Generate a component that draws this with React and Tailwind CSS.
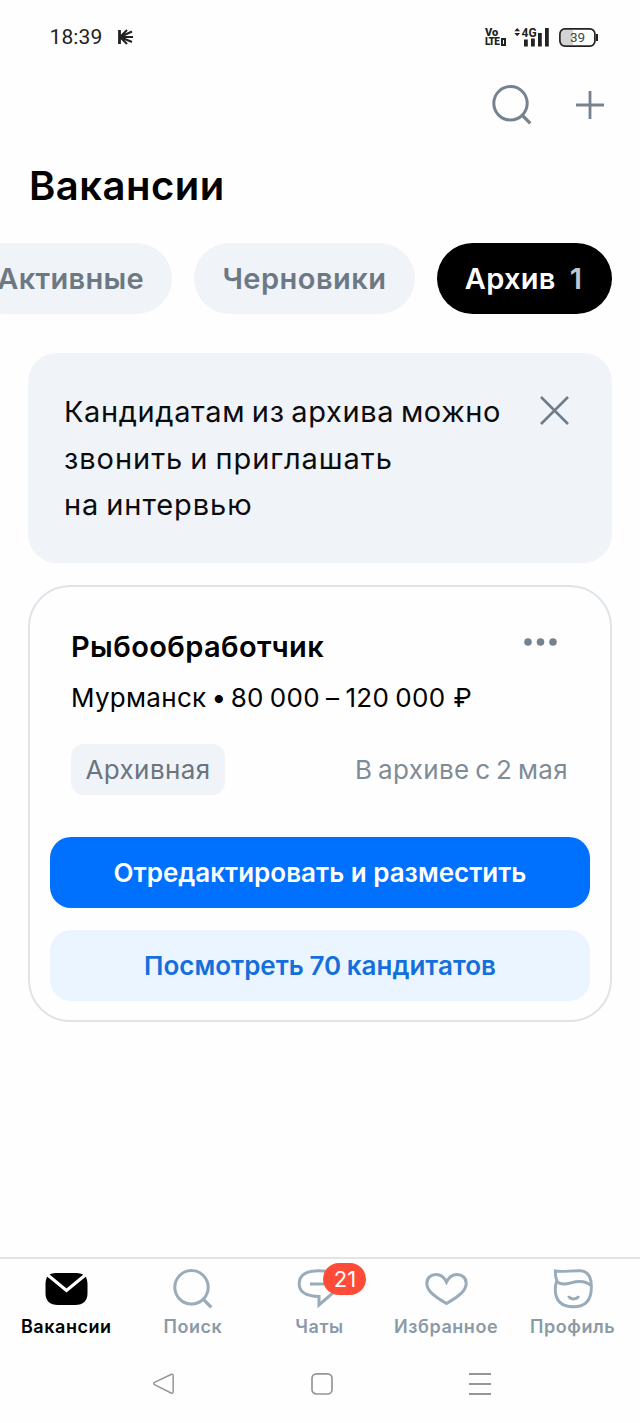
import React from "react";

const SearchIcon = ({ className }) => (
  <svg className={className} viewBox="0 0 40 40" fill="none" stroke="currentColor">
    <circle cx="18.5" cy="18.3" r="16.7" strokeWidth="3" />
    <path d="M30.5 30.5L38.3 38.3" strokeWidth="3.2" />
  </svg>
);

const StatusBar = () => (
  <div className="flex h-[74px] shrink-0 items-center justify-between pl-[49.5px] pr-[41px] text-[#222]">
    <div className="flex items-center gap-[15px]">
      <span className="font-['Roboto',sans-serif] text-[21px] leading-6 tracking-[0.1px]">18:39</span>
      <svg className="h-4 w-[17px]" viewBox="0 0 17 16" fill="none" stroke="currentColor">
        <path d="M2.5 1V15" strokeWidth="2.8" />
        <path d="M3 8L10 1M3 8L15 2.5M3 8H16M3 8L15 13M3 8L10 15" strokeWidth="2" />
      </svg>
    </div>
    <div className="flex items-center">
      <div className="mr-[8px] flex w-[21px] flex-col font-['Roboto',sans-serif] text-[10px] font-black leading-[9.5px]">
        <span className="text-[11px]">Vo</span>
        <span className="flex items-center tracking-[-0.8px]">
          LTE
          <i className="ml-[2px] h-[8px] w-[5px] shrink-0 border-2 border-[#222]" />
        </span>
      </div>
      <svg className="mr-[9px] h-[20px] w-[36px] overflow-visible" viewBox="0 0 36 20" fill="currentColor">
        <path d="M0.300 4.300L3.200 1L6.100 4.300ZM0.300 6H6.100L3.200 9.300Z" />
        <text x="7.5" y="10" className="font-['Roboto',sans-serif] text-[12px] font-bold">4G</text>
        <path d="M10 12.5H13.800V19.500H10ZM17 11.500H20.800V19.500H17ZM24 6H27.800V19.500H24ZM31 1H34.800V19.500H31Z" />
      </svg>
      <svg className="h-[19px] w-[40px]" viewBox="0 0 40 19">
        <path d="M5 2H14V17H5Q2 17 2 14V5Q2 2 5 2Z" fill="#d4d4d4" />
        <rect x="0.9" y="0.9" width="35" height="17.2" rx="5" fill="none" stroke="#222" strokeWidth="1.7" />
        <path d="M38 6V13" stroke="#222" strokeWidth="2" />
        <text x="18.5" y="14.2" textAnchor="middle" fill="#444" className="font-['Roboto',sans-serif] text-[13.5px]">39</text>
      </svg>
    </div>
  </div>
);

const Header = () => (
  <>
    <div className="flex h-[62px] items-center justify-end gap-[43px] pr-[35px] text-[#76838f]">
      <SearchIcon className="h-10 w-10" />
      <svg className="h-[30px] w-[30px]" viewBox="0 0 30 30" stroke="currentColor" strokeWidth="2.8">
        <path d="M15 1V29M1 15H29" />
      </svg>
    </div>
    <h1 className="mt-[26px] pl-[29px] text-[40px] font-semibold leading-[48px] tracking-[0.5px] text-black">
      Вакансии
    </h1>
  </>
);

const Tabs = () => (
  <div className="mt-[33px] flex h-[71px] justify-end gap-[22px] overflow-hidden pr-[28px] text-[29px] font-semibold tracking-[0.3px] text-[#6c7883]">
    <div className="flex w-[201px] shrink-0 items-center justify-end rounded-full bg-[#f0f3f8] pr-[28px]">
      Активные
    </div>
    <div className="flex w-[221px] shrink-0 items-center justify-center rounded-full bg-[#f0f3f8] tracking-[0.5px]">
      Черновики
    </div>
    <div className="flex w-[175px] shrink-0 items-center justify-center gap-[14px] rounded-full bg-black pr-[2px] text-white">
      Архив <span className="text-[#c0c6d2]">1</span>
    </div>
  </div>
);

const Notice = () => (
  <div className="mx-[28px] mt-[39px] flex h-[210px] justify-between rounded-[29px] bg-[#f0f3f8] pl-[36px] pr-[43px] pt-[36px]">
    <p className="whitespace-nowrap text-[29px] leading-[46.5px] text-[#0b0c0e] [word-spacing:-2px]">
      <span className="tracking-[0.62px]">Кандидатам из архива можно</span>
      <br />
      <span className="tracking-[0.95px]">звонить и приглашать</span>
      <br />
      <span className="tracking-[0.9px]">на интервью</span>
    </p>
    <svg className="mt-[7px] h-[29px] w-[29px] shrink-0" viewBox="0 0 29 29" stroke="#6f7d8a" strokeWidth="2.6">
      <path d="M1 1L28 28M28 1L1 28" />
    </svg>
  </div>
);

const VacancyCard = () => (
  <div className="mx-[28px] mt-[22px] h-[437px] rounded-[42px] border-2 border-[#dfe4e9] px-[20px]">
    <div className="flex justify-between pl-[21px] pr-[33px] pt-[40px]">
      <h2 className="whitespace-nowrap text-[29px] font-semibold leading-[40px] tracking-[0.4px] text-black">
        Рыбообработчик
      </h2>
      <svg className="mt-[10.5px] h-2 w-[33px]" viewBox="0 0 33 8" fill="#76838f">
        <circle cx="4" cy="4" r="3.8" />
        <circle cx="16.5" cy="4" r="3.8" />
        <circle cx="29" cy="4" r="3.8" />
      </svg>
    </div>
    <p className="mt-[12px] whitespace-nowrap pl-[21px] text-[26px] leading-[38px] tracking-[0.3px] text-black [word-spacing:-1.5px]">
      Мурманск<span className="-ml-[1px]"> •</span>
      <span className="-ml-[2px]"> 80 000 – 120 000</span>
      <span className="ml-[2px]"> ₽</span>
    </p>
    <div className="mt-[27px] flex h-[51px] items-center justify-between pl-[21px] pr-[22px] text-[26px]">
      <span className="flex h-full w-[154px] items-center justify-center rounded-[13px] bg-[#f0f3f8] tracking-[0.4px] text-[#6a7580]">
        Архивная
      </span>
      <span className="whitespace-nowrap tracking-[0.35px] text-[#7f8c98] [word-spacing:-2px]">В архиве с 2 мая</span>
    </div>
    <button className="mt-[42px] flex h-[71px] w-full items-center justify-center rounded-[21px] bg-[#0070ff] text-[26px] font-semibold text-white">
      Отредактировать и разместить
    </button>
    <button className="mt-[22px] flex h-[71px] w-full items-center justify-center rounded-[21px] bg-[#ebf5ff] text-[26px] font-semibold text-[#146fdc] [word-spacing:-1px]">
      Посмотреть 70 кандитатов
    </button>
  </div>
);

const tabs = [
  {
    label: "Вакансии",
    icon: (
      <svg className="h-10 w-[44px]" viewBox="0 0 44 40">
        <path d="M12 4H32Q43.500 4 43.500 15V24Q43.500 36 31 36H14Q1.500 36 1.500 24V15Q1.500 4 12 4Z" fill="#000" />
        <path d="M2.500 5L22.500 21.500L42.500 5" fill="none" stroke="#fff" strokeWidth="3.200" />
      </svg>
    ),
  },
  { label: "Поиск", icon: <SearchIcon className="h-10 w-10" /> },
  {
    label: "Чаты",
    badge: 21,
    icon: (
      <svg className="h-10 w-[44px]" viewBox="0 0 44 40" fill="none" stroke="currentColor" strokeWidth="3">
        <path d="M22 27.500V36L34 25.500C39 23 42 19.500 42 15C42 6.500 35 1.700 22 1.700C8 1.700 2.200 7 2.200 14.700C2.200 23 8 27 22 27.500Z" />
        <path d="M13 15H30" />
      </svg>
    ),
  },
  {
    label: "Избранное",
    icon: (
      <svg className="h-10 w-[44px]" viewBox="0 0 44 40" fill="none" stroke="currentColor" strokeWidth="3">
        <path d="M22.500 34.500C8.500 26.500 2.800 21 2.800 14.300C2.800 9 6.800 5.400 12 5.400C17 5.400 20.100 8 22.500 13C24.900 8 28 5.400 33 5.400C38.200 5.400 42.200 9 42.200 14.300C42.200 21 36.500 26.500 22.500 34.500Z" />
      </svg>
    ),
  },
  {
    label: "Профиль",
    icon: (
      <svg className="h-10 w-10" viewBox="0 0 40 40" fill="none" stroke="currentColor" strokeWidth="2.900">
        <path d="M2.300 2C9 3.300 18 1.500 27 1.700C34.500 1.900 38.400 7 38.400 18C38.400 31.500 32 37.800 20.500 37.800C8.500 37.800 2.300 32 2.300 20C2.300 16.500 3 14 3.800 11.500C2.600 8.500 2.300 5.500 2.300 2Z" />
        <path d="M3.800 12.500C7 15.500 11.500 15.700 18 13.800C26 11.500 33.500 12.500 38 16.500" />
        <path d="M15.500 27C17.300 31 23.900 31 25.700 27" />
      </svg>
    ),
  },
];

const BottomNav = () => (
  <nav className="mt-auto flex h-[91px] shrink-0 border-t-2 border-[#dfe4e8] pl-[3px] pr-[4px] pt-[10px]">
    {tabs.map((tab, i) => (
      <div
        key={tab.label}
        className={`flex flex-1 flex-col items-center ${i === 0 ? "text-black" : "text-[#9aabb9]"}`}
      >
        <div className="relative flex h-10 justify-center">
          {tab.icon}
          {tab.badge && (
            <span className="absolute -top-[6px] left-[26px] flex h-[32px] w-[43px] items-center justify-center rounded-full bg-[#ff4b37] text-[22px] text-white">
              {tab.badge}
            </span>
          )}
        </div>
        <span
          className={`mt-[6px] whitespace-nowrap text-[18px] font-semibold leading-6 tracking-[0.55px] ${
            i === 0 ? "text-black" : "text-[#8b9aa7]"
          }`}
        >
          {tab.label}
        </span>
      </div>
    ))}
  </nav>
);

const SystemNav = () => (
  <div className="flex h-[75px] shrink-0 items-start justify-between pl-[152px] pr-[148px] pt-[24px] text-[#969696]">
    <svg className="h-6 w-6" viewBox="0 0 24 24" fill="none" stroke="currentColor" strokeWidth="1.500">
      <path d="M19.500 2.300L2.500 10.300Q1 11.500 2.500 12.700L19.500 21.200Q21.200 21.500 21.200 19.700V3.800Q21.200 2 19.500 2.300Z" />
    </svg>
    <svg className="h-6 w-6" viewBox="0 0 24 24" fill="none" stroke="currentColor" strokeWidth="1.700">
      <rect x="2" y="1.800" width="20" height="20.200" rx="4.500" />
    </svg>
    <svg className="h-6 w-6" viewBox="0 0 24 24" stroke="currentColor" strokeWidth="1.800">
      <path d="M1 2H23M1 12H23M1 22H23" />
    </svg>
  </div>
);

const App = () => {
  return (
    <div className="flex h-[1423px] w-[640px] flex-col overflow-hidden bg-[#fefefe] font-['Inter',sans-serif]">
      <StatusBar />
      <Header />
      <Tabs />
      <Notice />
      <VacancyCard />
      <BottomNav />
      <SystemNav />
    </div>
  );
};

export default App;
